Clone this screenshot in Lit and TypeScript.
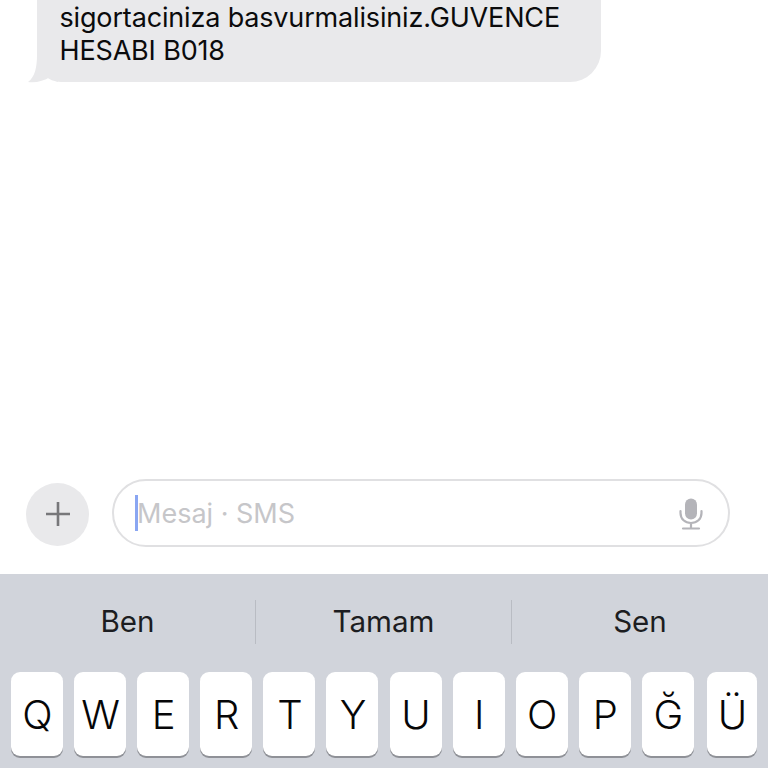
import { LitElement, html, css } from 'lit';
import { customElement } from 'lit/decorators.js';

const KEYS = ['Q', 'W', 'E', 'R', 'T', 'Y', 'U', 'I', 'O', 'P', 'Ğ', 'Ü'];
const SUGGESTIONS = ['Ben', 'Tamam', 'Sen'];

@customElement('app-root')
export class AppRoot extends LitElement {
  static styles = css`
    :host {
      display: block;
      font-family: Inter, 'Liberation Sans', sans-serif;
      color: #0b0b0c;
    }
    .screen {
      width: 768px;
      height: 768px;
      display: flex;
      flex-direction: column;
      overflow: hidden;
      background: #fff;
    }
    /* thread scrolled so that only the end of the message shows */
    .thread {
      flex: 1;
      padding-left: 37px;
    }
    .bubble {
      position: relative;
      box-sizing: border-box;
      width: 564px;
      margin-top: -31px;
      padding: 32px 22px 15px 22.5px;
      background: #e9e9eb;
      border-radius: 0 0 31px 24px;
      font-size: 27px;
      line-height: 33px;
      letter-spacing: -0.16px;
    }
    .tail {
      position: absolute;
      left: -9px;
      bottom: -1px;
    }
    .composer {
      display: flex;
      align-items: center;
      gap: 23px;
      padding: 0 38px 27px 26px;
    }
    .plus {
      width: 63px;
      height: 63px;
      flex: none;
      display: flex;
      align-items: center;
      justify-content: center;
      border-radius: 50%;
      background: #e9e9eb;
      margin-top: 2px;
    }
    .field {
      flex: 1;
      box-sizing: border-box;
      height: 68px;
      display: flex;
      align-items: center;
      padding: 0 25px 0 21px;
      border: 2px solid #e0e0e2;
      border-radius: 34px;
    }
    .caret {
      width: 3px;
      height: 36px;
      flex: none;
      background: #8aa6f2;
    }
    .placeholder {
      flex: 1;
      font-size: 27px;
      color: #c6c6c9;
      margin-left: -1px;
    }
    .mic {
      margin-top: 2px;
    }
    .keyboard {
      height: 194px;
      flex: none;
      background: #d1d4db;
    }
    .suggestions {
      display: flex;
      height: 96px;
      padding-bottom: 2px;
      align-items: center;
    }
    .suggestion {
      width: 256px;
      height: 44px;
      padding-bottom: 2px;
      display: flex;
      align-items: center;
      justify-content: center;
      font-size: 29.6px;
      color: #1c1d21;
      border-right: 1px solid #b9bcc3;
      box-sizing: border-box;
    }
    .suggestion:last-child {
      border-right: none;
    }
    .keys {
      display: flex;
      gap: 11.1px;
      padding: 0 11px;
    }
    .key {
      width: 52px;
      height: 84px;
      flex: none;
      display: flex;
      align-items: center;
      justify-content: center;
      padding-left: 1px;
      box-sizing: border-box;
      background: #fff;
      border-radius: 9px;
      box-shadow: 0 2px 0 #8f9197;
      font-size: 40px;
      font-weight: 300;
      color: #060607;
    }
    .key:last-child {
      margin-left: 2px;
      width: 50px;
    }
  `;

  render() {
    return html`
      <div class="screen">
        <div class="thread">
          <div class="bubble">
            <svg class="tail" width="30" height="30" viewBox="0 0 30 30">
              <path d="M9 2 C9 14 7 24 0 29 C8 30 16 28 22 24 C24 26 27 28 30 29 L30 2 Z" fill="#e9e9eb"></path>
            </svg>
            sigortaciniza basvurmalisiniz.GUVENCE<br />HESABI B018
          </div>
        </div>
        <div class="composer">
          <div class="plus">
            <svg width="26" height="26" viewBox="0 0 26 26">
              <path d="M13 1 V25 M1 13 H25" stroke="#77777a" stroke-width="2.6" fill="none"></path>
            </svg>
          </div>
          <div class="field">
            <span class="caret"></span>
            <span class="placeholder">Mesaj · SMS</span>
            <svg class="mic" width="24" height="32" viewBox="0 0 24 32">
              <rect x="6" y="0.5" width="12" height="21" rx="6" fill="#b4b4b9"></rect>
              <path d="M1.5 13 V15 C1.5 21 6 25 12 25 C18 25 22.5 21 22.5 15 V13 M12 25 V30.5 M4 30.5 H20" stroke="#b4b4b9" stroke-width="2.2" stroke-linecap="round" fill="none"></path>
            </svg>
          </div>
        </div>
        <div class="keyboard">
          <div class="suggestions">
            ${SUGGESTIONS.map((s) => html`<div class="suggestion">${s}</div>`)}
          </div>
          <div class="keys">
            ${KEYS.map((k) => html`<div class="key">${k}</div>`)}
          </div>
        </div>
      </div>
    `;
  }
}
